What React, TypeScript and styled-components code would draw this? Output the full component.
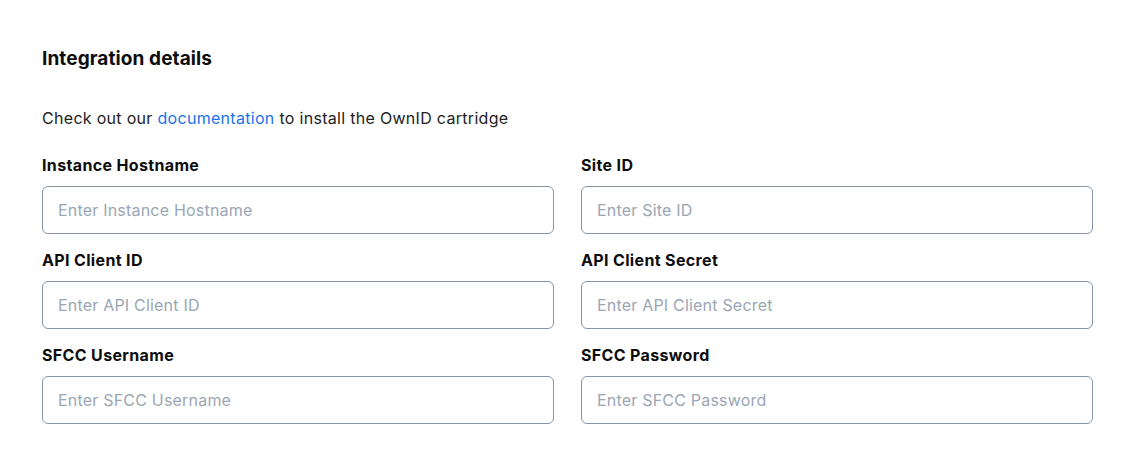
import styled, { createGlobalStyle } from "styled-components";

const GlobalStyle = createGlobalStyle`
  body {
    margin: 0;
    background: #ffffff;
    font-family: Inter, "Noto Sans", sans-serif;
    color: #111111;
  }
`;

const fields = [
  { label: "Instance Hostname", placeholder: "Enter Instance Hostname" },
  { label: "Site ID", placeholder: "Enter Site ID" },
  { label: "API Client ID", placeholder: "Enter API Client ID" },
  { label: "API Client Secret", placeholder: "Enter API Client Secret" },
  { label: "SFCC Username", placeholder: "Enter SFCC Username" },
  { label: "SFCC Password", placeholder: "Enter SFCC Password" },
];

const App = () => {
  return (
    <>
      <GlobalStyle />
      <SSection>
        <STitle>Integration details</STitle>
        <SIntro>
          Check out our <a href="#">documentation</a> to install the OwnID
          cartridge
        </SIntro>
        <SGrid>
          {fields.map((f) => (
            <SField key={f.label}>
              <SLabel>{f.label}</SLabel>
              <SInput placeholder={f.placeholder} />
            </SField>
          ))}
        </SGrid>
      </SSection>
    </>
  );
};
export default App;

const SSection = styled.div`
  width: 1051px;
  padding: 47px 0 0 42px;
  display: flex;
  flex-direction: column;
`;

const STitle = styled.div`
  font-size: 19px;
  line-height: 24px;
  font-weight: 700;
  letter-spacing: 0.1px;
  color: #0d0d0d;
`;

const SIntro = styled.div`
  margin-top: 35px;
  font-size: 16px;
  line-height: 24px;
  letter-spacing: 0.3px;
  color: #222222;
  & > a {
    color: #1a73e8;
    text-decoration: none;
  }
`;

const SGrid = styled.div`
  margin-top: 25px;
  display: grid;
  grid-template-columns: 512px 512px;
  column-gap: 27px;
  row-gap: 16px;
`;

const SField = styled.div`
  display: flex;
  flex-direction: column;
  gap: 11px;
`;

const SLabel = styled.div`
  font-size: 16px;
  line-height: 20px;
  font-weight: 700;
  letter-spacing: 0.35px;
  color: #0d0d0d;
`;

const SInput = styled.input`
  box-sizing: border-box;
  width: 100%;
  height: 48px;
  border: 1px solid #8595a8;
  border-radius: 6px;
  padding: 0 15px;
  font-family: Inter, "Noto Sans", sans-serif;
  font-size: 16px;
  letter-spacing: 0.2px;
  color: #222222;
  outline: none;
  &::placeholder {
    color: #9aa6b3;
  }
`;
